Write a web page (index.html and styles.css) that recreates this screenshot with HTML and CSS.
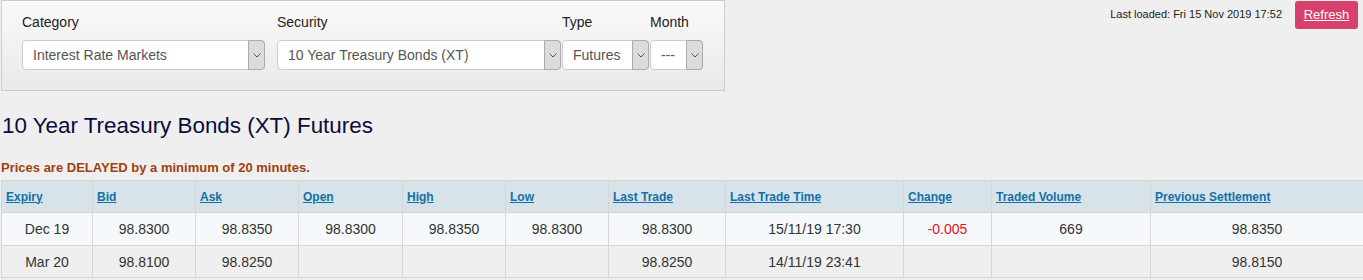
FILE: index.html
```html
<!DOCTYPE html>
<html lang="en">
<head>
    <meta charset="utf-8">
    <title>10 Year Treasury Bonds (XT) Futures</title>
    <link rel="stylesheet" href="styles.css">
</head>
<body>
<div class="top">
    <form class="filters" action="#">
        <div class="field category">
            <label>Category</label>
            <div class="select-box">
                <select><option>Interest Rate Markets</option></select>
                <span class="arrow"><svg width="8" height="5" viewBox="0 0 8 5"><path d="M0.5 0.5 L4 4 L7.5 0.5" fill="none" stroke="#555" stroke-width="1"/></svg></span>
            </div>
        </div>
        <div class="field security">
            <label>Security</label>
            <div class="select-box">
                <select><option>10 Year Treasury Bonds (XT)</option></select>
                <span class="arrow"><svg width="8" height="5" viewBox="0 0 8 5"><path d="M0.5 0.5 L4 4 L7.5 0.5" fill="none" stroke="#555" stroke-width="1"/></svg></span>
            </div>
        </div>
        <div class="field type">
            <label>Type</label>
            <div class="select-box">
                <select><option>Futures</option></select>
                <span class="arrow"><svg width="8" height="5" viewBox="0 0 8 5"><path d="M0.5 0.5 L4 4 L7.5 0.5" fill="none" stroke="#555" stroke-width="1"/></svg></span>
            </div>
        </div>
        <div class="field month">
            <label>Month</label>
            <div class="select-box">
                <select><option>---</option></select>
                <span class="arrow"><svg width="8" height="5" viewBox="0 0 8 5"><path d="M0.5 0.5 L4 4 L7.5 0.5" fill="none" stroke="#555" stroke-width="1"/></svg></span>
            </div>
        </div>
    </form>
    <div class="status">
        <span class="loaded">Last loaded: Fri 15 Nov 2019 17:52</span>
        <a href="#" class="refresh">Refresh</a>
    </div>
</div>

<h1 class="title">10 Year Treasury Bonds (XT) Futures</h1>
<p class="delayed">Prices are DELAYED by a minimum of 20 minutes.</p>

<table class="prices">
    <thead>
        <tr>
            <th><a href="#">Expiry</a></th>
            <th><a href="#">Bid</a></th>
            <th><a href="#">Ask</a></th>
            <th><a href="#">Open</a></th>
            <th><a href="#">High</a></th>
            <th><a href="#">Low</a></th>
            <th><a href="#">Last Trade</a></th>
            <th><a href="#">Last Trade Time</a></th>
            <th><a href="#">Change</a></th>
            <th><a href="#">Traded Volume</a></th>
            <th><a href="#">Previous Settlement</a></th>
        </tr>
    </thead>
    <tbody>
        <tr>
            <td>Dec 19</td>
            <td>98.8300</td>
            <td>98.8350</td>
            <td>98.8300</td>
            <td>98.8350</td>
            <td>98.8300</td>
            <td>98.8300</td>
            <td>15/11/19 17:30</td>
            <td class="down">-0.005</td>
            <td>669</td>
            <td>98.8350</td>
        </tr>
        <tr>
            <td>Mar 20</td>
            <td>98.8100</td>
            <td>98.8250</td>
            <td></td>
            <td></td>
            <td></td>
            <td>98.8250</td>
            <td>14/11/19 23:41</td>
            <td></td>
            <td></td>
            <td>98.8150</td>
        </tr>
    </tbody>
</table>
</body>
</html>
```

FILE: styles.css
```css
*{
    margin:0;
    padding:0;
    box-sizing:border-box;
    font-family:'Liberation Sans', Arial, sans-serif;
}
body{
    background:#efefef;
    color:#333;
    width:1363px;
}
.top{
    display:flex;
    align-items:flex-start;
}
.filters{
    display:flex;
    width:724px;
    height:91px;
    margin-left:1px;
    padding:13px 20px 0 20px;
    border:1px solid #ccc;
    background:linear-gradient(#fafafa, #e9e9e9);
}
.field label{
    display:block;
    font-size:14px;
    line-height:16px;
    color:#222;
    margin-bottom:10px;
}
.field.category{ width:243px; margin-right:12px; }
.field.security{ width:284px; margin-right:1px; }
.field.type{ width:87px; margin-right:1px; }
.field.month{ width:53px; }
.select-box{
    display:flex;
    height:30px;
    background:#fff;
    border:1px solid #ccc;
    border-radius:4px;
}
.select-box select{
    flex:1;
    min-width:0;
    appearance:none;
    -webkit-appearance:none;
    border:none;
    outline:none;
    background:transparent;
    font-size:14px;
    color:#555;
    padding-left:10px;
}
.select-box .arrow{
    width:17px;
    margin:-1px -1px -1px 0;
    display:flex;
    align-items:center;
    justify-content:center;
    background:#dcdcdc;
    border:1px solid #aaa;
    border-radius:0 4px 4px 0;
}
.status{
    display:flex;
    align-items:flex-start;
    margin-left:auto;
    margin-right:5px;
}
.loaded{
    font-size:11px;
    color:#222;
    margin-top:8px;
    margin-right:13px;
}
.refresh{
    display:block;
    width:63px;
    height:28px;
    margin-top:1px;
    line-height:28px;
    text-align:center;
    font-size:13px;
    color:#fff;
    background:#d7406a;
    border-radius:3px;
}
.title{
    font-size:22.4px;
    font-weight:normal;
    color:#0b0b3f;
    margin:22px 0 0 2px;
}
.delayed{
    font-size:13px;
    font-weight:bold;
    color:#a0410d;
    margin:21px 0 5px 1px;
}
.prices{
    width:1362px;
    margin-left:1px;
    border-collapse:collapse;
    table-layout:fixed;
}
.prices th,
.prices td{
    border:1px solid #d6d6d6;
}
.prices th{
    height:32px;
    padding:0 4px;
    text-align:left;
    background:#d7e3e9;
    font-size:12px;
}
.prices th a{
    color:#1270a8;
}
.prices td{
    height:33px;
    text-align:center;
    font-size:14px;
    color:#333;
}
.prices tbody tr:first-child td{
    background:#f5f9fc;
}
.prices tbody tr:last-child td{
    height:32px;
    background:#efefef;
}
.prices td.down{
    color:#e8101e;
}
.prices th:nth-child(1){ width:91px; }
.prices th:nth-child(2){ width:103px; }
.prices th:nth-child(3){ width:103px; }
.prices th:nth-child(4){ width:104px; }
.prices th:nth-child(5){ width:103px; }
.prices th:nth-child(6){ width:103px; }
.prices th:nth-child(7){ width:117px; }
.prices th:nth-child(8){ width:178px; }
.prices th:nth-child(9){ width:88px; }
.prices th:nth-child(10){ width:159px; }
.prices th:nth-child(11){ width:213px; }
```
